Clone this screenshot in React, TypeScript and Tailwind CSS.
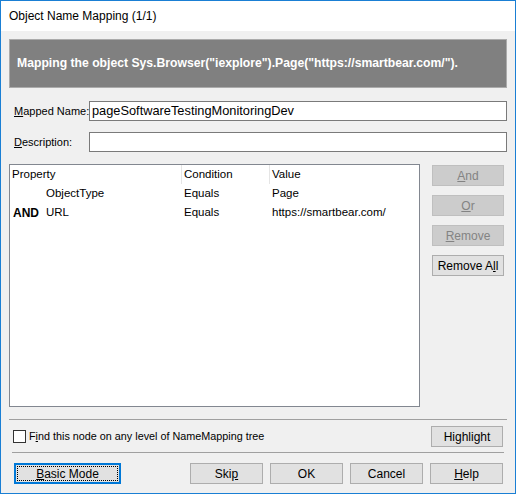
const font = { fontFamily: '"Liberation Sans", Arial, sans-serif' };

function Btn({
  children,
  disabled,
  className = "",
}: {
  children: React.ReactNode;
  disabled?: boolean;
  className?: string;
}) {
  return (
    <div
      className={
        "flex h-[21px] items-center justify-center border text-[12px] " +
        (disabled
          ? "border-[#bfbfbf] bg-[#cccccc] text-[#838383] "
          : "border-[#adadad] bg-[#e1e1e1] text-black ") +
        className
      }
    >
      {children}
    </div>
  );
}

export default function App() {
  return (
    <div
      style={font}
      className="flex h-[494px] w-[516px] flex-col border border-[#1a7fd4] bg-[#f0f0f0] text-black"
    >
      {/* title bar */}
      <div className="flex h-[30px] shrink-0 items-center bg-white pl-[8px] text-[12px]">
        Object Name Mapping (1/1)
      </div>

      <div className="flex flex-1 flex-col px-[8px]">
        {/* banner */}
        <div className="mt-[8px] flex h-[49px] items-center whitespace-nowrap border border-[#ababab] bg-[#808080] pl-[7px] text-[12.2px] font-bold text-white">
          Mapping the object Sys.Browser("iexplore").Page("https://smartbear.com/").
        </div>

        {/* mapped name */}
        <div className="mt-[13px] flex h-[20px] items-center text-[11px]">
          <div className="w-[80px] shrink-0 whitespace-nowrap pl-[5px]">
            <span className="underline">M</span>apped Name:
          </div>
          <div className="flex h-full flex-1 items-center border border-[#7a7a7a] bg-white pl-[2px] text-[12.8px]">
            pageSoftwareTestingMonitoringDev
          </div>
        </div>

        {/* description */}
        <div className="mt-[11px] flex h-[20px] items-center text-[11px]">
          <div className="w-[80px] shrink-0 whitespace-nowrap pl-[5px]">
            <span className="underline">D</span>escription:
          </div>
          <div className="h-full flex-1 border border-[#7a7a7a] bg-white" />
        </div>

        {/* table + side buttons */}
        <div className="mt-[12px] flex">
          <div className="h-[243px] w-[411px] border border-[#828790] bg-white text-[11.5px]">
            <div className="flex h-[19px] items-center">
              <div className="w-[171px] pl-[2px]">Property</div>
              <div className="h-full w-px bg-[#e5e5e5]" />
              <div className="w-[87px] pl-[2px]">Condition</div>
              <div className="h-full w-px bg-[#e5e5e5]" />
              <div className="pl-[2px]">Value</div>
            </div>
            <div className="flex h-[19px] items-center">
              <div className="w-[172px] pl-[36px]">ObjectType</div>
              <div className="w-[88px] pl-[2px]">Equals</div>
              <div className="pl-[2px]">Page</div>
            </div>
            <div className="flex h-[19px] items-center">
              <div className="flex w-[172px] items-center">
                <span className="w-[36px] pl-[3px] text-[12px] font-bold">AND</span>
                <span>URL</span>
              </div>
              <div className="w-[88px] pl-[2px]">Equals</div>
              <div className="pl-[2px]">https://smartbear.com/</div>
            </div>
          </div>

          <div className="ml-[12px] mt-[1px] flex w-[72px] flex-col gap-[9px]">
            <Btn disabled>
              <span className="underline">A</span>nd
            </Btn>
            <Btn disabled>
              <span className="underline">O</span>r
            </Btn>
            <Btn disabled>
              <span className="underline">R</span>emove
            </Btn>
            <Btn>
              Remove A<span className="underline">l</span>l
            </Btn>
          </div>
        </div>

        {/* separator */}
        <div className="mt-[12px] h-px bg-[#a0a0a0]" />

        {/* checkbox row */}
        <div className="mt-[6px] flex items-center justify-between">
          <label className="ml-[4px] flex items-center text-[10.8px]">
            <span className="h-[13px] w-[13px] border border-[#333333] bg-white" />
            <span className="ml-[3px] text-[10.8px]">
              F<span className="underline">i</span>nd this node on any level of NameMapping tree
            </span>
          </label>
          <Btn className="mr-[4px] w-[72px]">
            Hi<span className="underline">g</span>hlight
          </Btn>
        </div>

        {/* separator */}
        <div className="mx-[3px] mt-[5px] h-px bg-[#a0a0a0]" />

        {/* bottom buttons */}
        <div className="mt-[10px] flex items-center">
          <div className="ml-[5px] flex h-[21px] w-[107px] items-center justify-center border-2 border-[#0078d7] bg-[#e1e1e1] p-px text-[12px]">
            <div className="flex h-full w-full items-center justify-center border border-dotted border-black">
              <span className="underline">B</span>asic Mode
            </div>
          </div>
          <div className="ml-auto mr-[4px] flex gap-[7px]">
            <Btn className="w-[73px]">
              Ski<span className="underline">p</span>
            </Btn>
            <Btn className="w-[73px]">OK</Btn>
            <Btn className="w-[73px]">Cancel</Btn>
            <Btn className="w-[73px]">
              <span className="underline">H</span>elp
            </Btn>
          </div>
        </div>
      </div>
    </div>
  );
}
